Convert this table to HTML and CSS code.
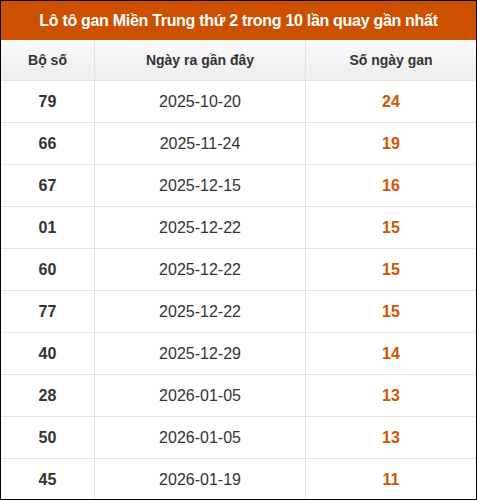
FILE: index.html
```html
<!DOCTYPE html>
<html lang="vi">
<head>
  <meta charset="UTF-8">
  <meta name="viewport" content="width=device-width, initial-scale=1">
  <title>Lô tô gan Miền Trung</title>
  <link rel="stylesheet" href="styles.css">
</head>
<body>
  <div class="khung">
    <div class="tieu-de">Lô tô gan Miền Trung thứ 2 trong 10 lần quay gần nhất</div>
    <table class="bang">
      <thead>
        <tr>
          <th class="c1">Bộ số</th>
          <th class="c2">Ngày ra gần đây</th>
          <th>Số ngày gan</th>
        </tr>
      </thead>
      <tbody>
        <tr><td class="so">79</td><td class="ngay">2025-10-20</td><td class="gan">24</td></tr>
        <tr><td class="so">66</td><td class="ngay">2025-11-24</td><td class="gan">19</td></tr>
        <tr><td class="so">67</td><td class="ngay">2025-12-15</td><td class="gan">16</td></tr>
        <tr><td class="so">01</td><td class="ngay">2025-12-22</td><td class="gan">15</td></tr>
        <tr><td class="so">60</td><td class="ngay">2025-12-22</td><td class="gan">15</td></tr>
        <tr><td class="so">77</td><td class="ngay">2025-12-22</td><td class="gan">15</td></tr>
        <tr><td class="so">40</td><td class="ngay">2025-12-29</td><td class="gan">14</td></tr>
        <tr><td class="so">28</td><td class="ngay">2026-01-05</td><td class="gan">13</td></tr>
        <tr><td class="so">50</td><td class="ngay">2026-01-05</td><td class="gan">13</td></tr>
        <tr><td class="so">45</td><td class="ngay">2026-01-19</td><td class="gan">11</td></tr>
      </tbody>
    </table>
  </div>
</body>
</html>
```

FILE: styles.css
```css
body {
  margin: 0;
  font-family: 'Liberation Sans', Arial, sans-serif;
  color: #333;
}

.khung {
  width: 477px;
  height: 500px;
  box-sizing: border-box;
  border: 1px solid #000;
  overflow: hidden;
  background: #fff;
}

.tieu-de {
  height: 39px;
  line-height: 39px;
  background: #cc5000;
  color: #fff;
  font-size: 16px;
  letter-spacing: -0.3px;
  font-weight: bold;
  text-align: center;
}

.bang {
  width: 475px;
  border-collapse: collapse;
  table-layout: fixed;
}

.bang th,
.bang td {
  border: 1px solid #e2e2e2;
  text-align: center;
  padding: 0;
}

.bang tr > :first-child { border-left: none; }
.bang tr > :last-child { border-right: none; }

.bang th {
  height: 40px;
  border-top: none;
  background: linear-gradient(to bottom, #fafafa, #ededed);
  font-size: 14px;
  font-weight: bold;
  color: #333;
}

.c1 { width: 93px; }
.c2 { width: 210px; }

.bang td {
  height: 41px;
  font-size: 16px;
}

.so {
  font-weight: bold;
  color: #333;
}

.ngay {
  color: #333;
}

.gan {
  font-weight: bold;
  color: #d35400;
  font-size: 17px;
}
```
